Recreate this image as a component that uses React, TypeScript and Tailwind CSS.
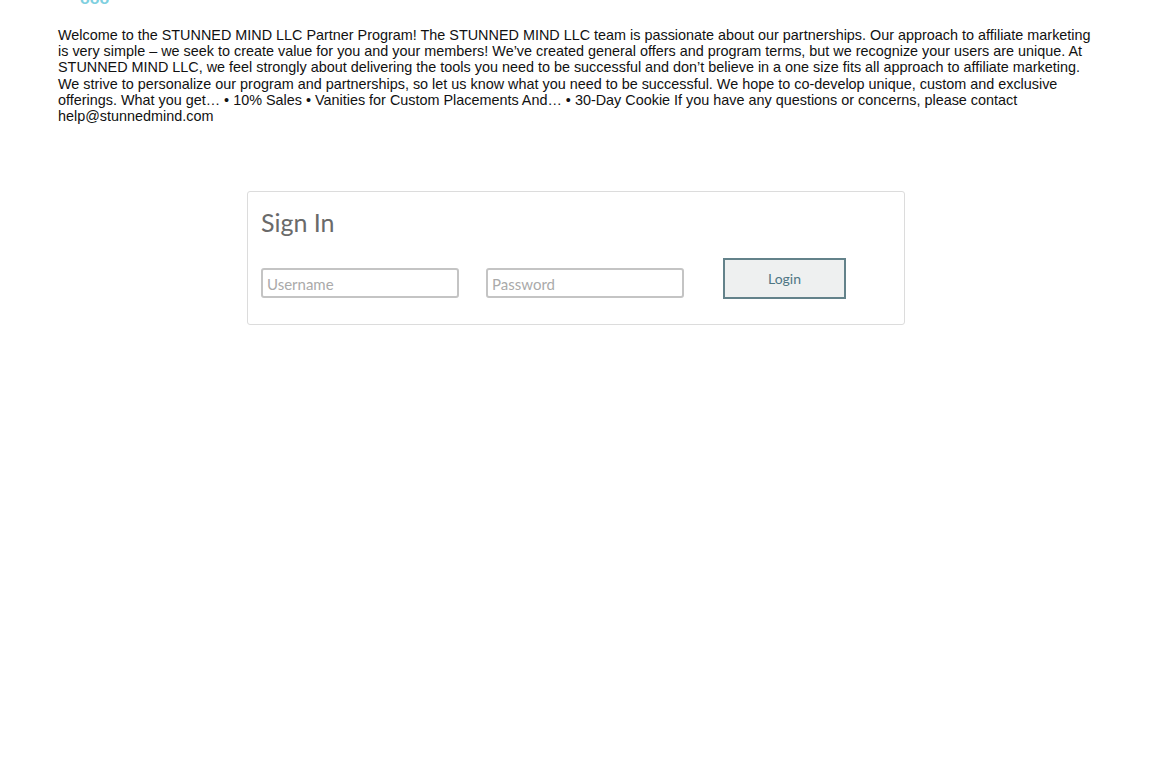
import React from "react";

export default function App() {
  return (
    <div className="min-h-[768px] w-full bg-white" style={{ fontFamily: '"Liberation Sans", Arial, sans-serif' }}>
      <div className="relative h-[6px] overflow-hidden">
        <div className="absolute left-[80px] top-[-9px] text-[16px] font-bold leading-none tracking-[0px] text-[#7fd0e0]">ooo</div>
        <div className="absolute right-[60px] top-[-8px] text-[10px] leading-none text-[#777]">Part of Affiliate</div>
      </div>
      <div className="px-[58px] pt-[21px]">
        <p className="text-[14.4px] leading-[16.2px] text-[#111]">
          Welcome to the STUNNED MIND LLC Partner Program! The STUNNED MIND LLC team is passionate about our partnerships. Our approach to affiliate marketing is very simple – we seek to create value for you and your members! We’ve created general offers and program terms, but we recognize your users are unique. At STUNNED MIND LLC, we feel strongly about delivering the tools you need to be successful and don’t believe in a one size fits all approach to affiliate marketing. We strive to personalize our program and partnerships, so let us know what you need to be successful. We hope to co-develop unique, custom and exclusive offerings. What you get… • 10% Sales • Vanities for Custom Placements And… • 30-Day Cookie If you have any questions or concerns, please contact help@stunnedmind.com
        </p>
      </div>
      <div className="mt-[67px] flex justify-center">
        <div
          className="h-[134px] w-[658px] rounded-[3px] border border-[#dcdcdc] px-[13px] pt-[14px]"
          style={{ fontFamily: '"Lato", "Open Sans", sans-serif' }}
        >
          <h2 className="text-[25px] leading-[32px] text-[#6a6a6a]">Sign In</h2>
          <div className="mt-[20px] flex items-end">
            <input
              placeholder="Username"
              className="mb-[1px] h-[30px] w-[198px] rounded-[3px] border-2 border-[#c4c4c4] px-[4px] pt-[2px] text-[15px] text-[#333] outline-none placeholder:text-[#aaa]"
            />
            <input
              type="password"
              placeholder="Password"
              className="mb-[1px] ml-[27px] h-[30px] w-[198px] rounded-[3px] border-2 border-[#c4c4c4] px-[4px] pt-[2px] text-[15px] text-[#333] outline-none placeholder:text-[#aaa]"
            />
            <button className="ml-[39px] h-[41px] w-[123px] border-2 border-[#63828a] bg-[#eef0f0] text-[14px] text-[#4e7684]">
              Login
            </button>
          </div>
        </div>
      </div>
    </div>
  );
}
